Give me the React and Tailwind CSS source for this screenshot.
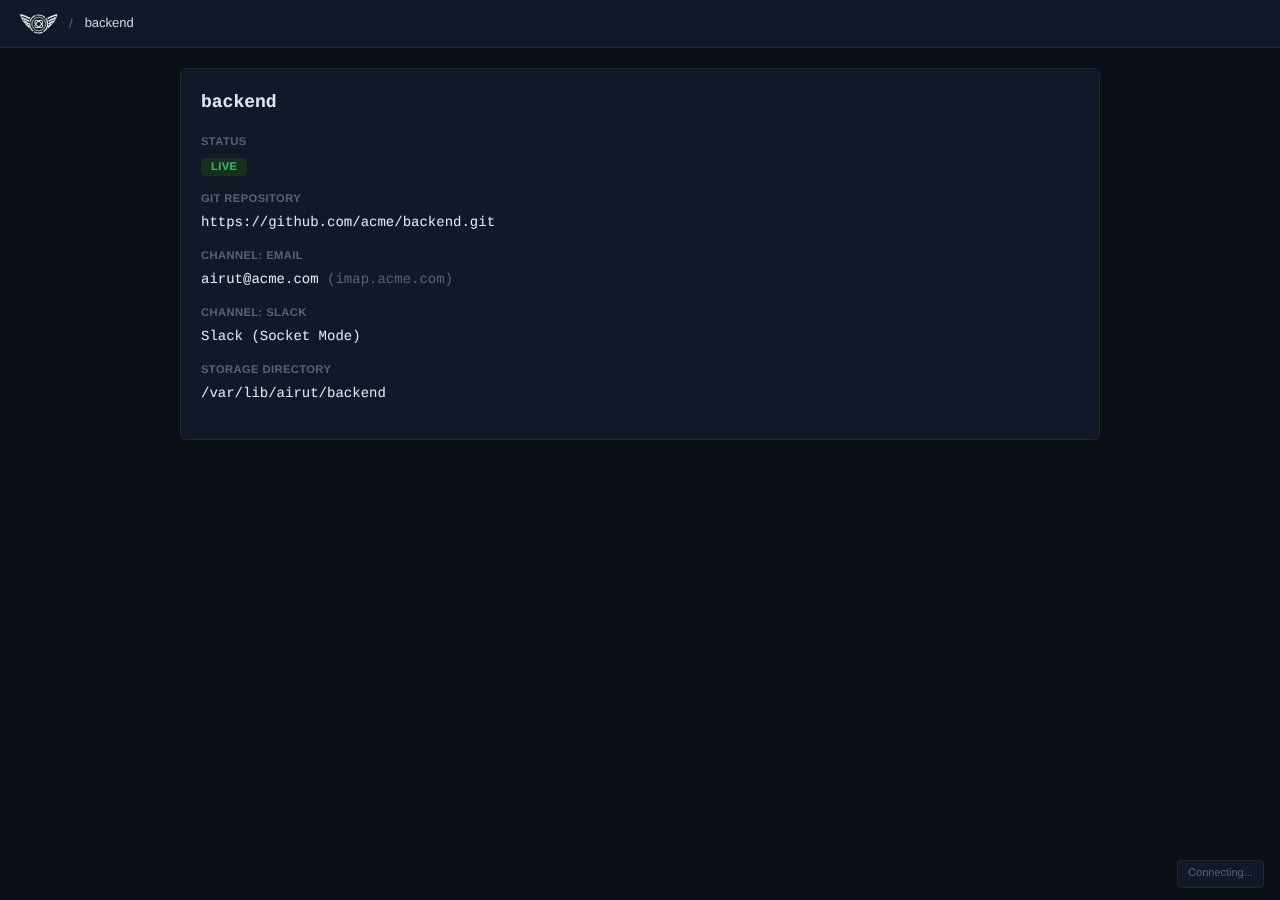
const mono = "font-['Liberation_Mono',monospace]";

function Logo() {
    return (
        <svg width="38" height="22" viewBox="0 0 38 22" fill="none" stroke="#e5e7eb">
            <circle cx="18.7" cy="11" r="9" strokeWidth="1.2" strokeDasharray="9 1" />
            <circle cx="18.7" cy="11" r="6.8" strokeWidth="0.8" />
            <ellipse cx="18.7" cy="11" rx="4.6" ry="2.4" strokeWidth="1" transform="rotate(45 18.7 11)" />
            <ellipse cx="18.7" cy="11" rx="4.6" ry="2.4" strokeWidth="1" transform="rotate(-45 18.7 11)" />
            <path d="M0.5 1.8 Q5 3 10 5.5 M2 5 Q5 6 9 8.2 M3.8 8 Q6 9 8.8 11 M6 11 Q7.5 12 9.5 14" strokeWidth="1.5" />
            <path d="M0.5 1.8 Q2 9 9.5 15" strokeWidth="0.9" />
            <path d="M37 1.8 Q32.5 3 27.5 5.5 M35.5 5 Q32.5 6 28.5 8.2 M33.7 8 Q31.5 9 28.7 11 M31.5 11 Q30 12 28 14" strokeWidth="1.5" />
            <path d="M37 1.8 Q35.5 9 28 15" strokeWidth="0.9" />
        </svg>
    );
}

function Field({ label, children }) {
    return (
        <div className="mb-[13px]">
            <div className="text-[11.2px] leading-[17px] font-bold uppercase tracking-[0.4px] text-[#566479] mb-1">
                {label}
            </div>
            {children}
        </div>
    );
}

function Value({ children }) {
    return <div className={`${mono} text-sm leading-[23px] text-[#e2e8f0]`}>{children}</div>;
}

export default function App() {
    return (
        <div className="min-h-[900px] bg-[#0b0f16] font-['Liberation_Sans',sans-serif] will-change-transform [text-rendering:geometricPrecision]">
            <header className="h-12 flex items-center pl-5 bg-[#111827] border-b border-[#232b38]">
                <Logo />
                <span className="ml-[11px] text-[13px] text-[#566479]">/</span>
                <span className="ml-3 text-[13px] text-[#d0d7e2] -translate-y-px">backend</span>
            </header>
            <main className="w-[920px] mx-auto mt-5">
                <div className="h-[372px] bg-[#111827] border border-[#1f2937] rounded-md px-5 pt-5">
                    <h1 className={`${mono} text-lg leading-[28px] font-bold text-[#e2e8f0] mb-[17px]`}>backend</h1>
                    <Field label="Status">
                        <span className="block w-fit h-[18px] px-[10px] mt-[7px] mb-[15px] rounded bg-[#14311f] text-[11.2px] leading-[19px] font-bold tracking-[0.4px] text-[#2fbf62]">
                            LIVE
                        </span>
                    </Field>
                    <Field label="Git Repository">
                        <Value>https://github.com/acme/backend.git</Value>
                    </Field>
                    <Field label="Channel: Email">
                        <Value>
                            airut@acme.com <span className="text-[#566479]">(imap.acme.com)</span>
                        </Value>
                    </Field>
                    <Field label="Channel: Slack">
                        <Value>Slack (Socket Mode)</Value>
                    </Field>
                    <Field label="Storage Directory">
                        <Value>/var/lib/airut/backend</Value>
                    </Field>
                </div>
            </main>
            <div className="fixed right-4 bottom-3 h-7 w-[87px] pb-px flex items-center justify-center bg-[#111827] border border-[#1f2937] rounded text-[11px] text-[#566479]">
                Connecting...
            </div>
        </div>
    );
}
